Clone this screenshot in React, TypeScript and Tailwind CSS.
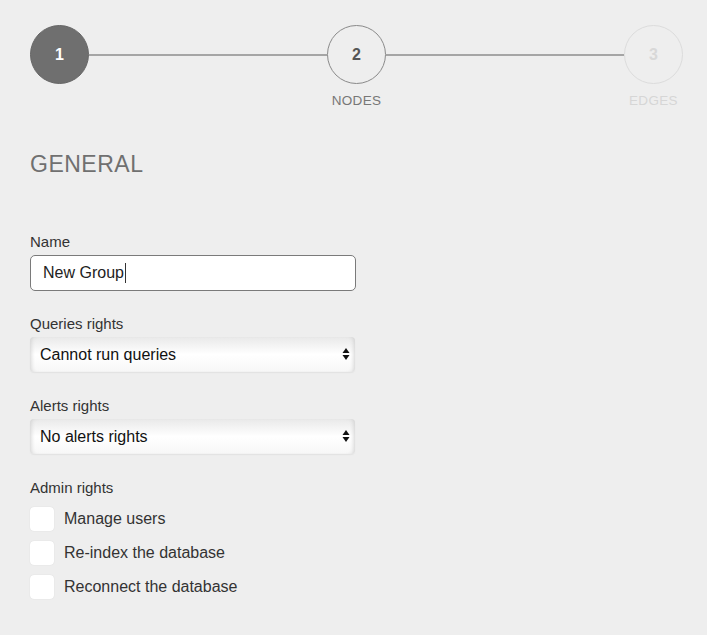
const steps = [
  { n: 1, label: "", state: "done" },
  { n: 2, label: "NODES", state: "next" },
  { n: 3, label: "EDGES", state: "todo" },
];

function Step({ n, label, state }: { n: number; label: string; state: string }) {
  const circle =
    state === "done"
      ? "bg-[#6f6f6f] border-[#666] text-white"
      : state === "next"
        ? "border-[#8a8a8a] text-[#555]"
        : "border-[#dcdcdc] text-[#d8d8d8]";
  const text = state === "todo" ? "text-[#d6d6d6]" : "text-[#777]";
  return (
    <div className="relative flex flex-col items-center">
      <div
        className={`w-[59px] h-[59px] rounded-full border flex items-center justify-center text-[16px] font-bold ${circle}`}
      >
        {n}
      </div>
      <span className={`absolute top-[66px] text-[13.5px] tracking-wide ${text}`}>{label}</span>
    </div>
  );
}

function Select({ value }: { value: string }) {
  return (
    <div className="relative w-[325px] h-[35px] rounded-[4px] bg-gradient-to-b from-[#e9e9e9] via-white to-[#f7f7f7] shadow-[inset_4px_0_4px_-3px_#d0d0d0,inset_-4px_0_4px_-3px_#d0d0d0,0_1px_1px_#e2e2e2] flex items-center pl-[10px] text-[16px] text-[#111]">
      {value}
      <span className="absolute right-[5px] top-[10px] flex flex-col items-center leading-none">
        <svg width="8" height="14" viewBox="0 0 8 14">
          <path d="M4 1 L7.5 6 H0.5 Z" fill="#111" />
          <path d="M4 13 L7.5 8 H0.5 Z" fill="#111" />
        </svg>
      </span>
    </div>
  );
}

const checks = ["Manage users", "Re-index the database", "Reconnect the database"];

export default function App() {
  return (
    <div className="w-[707px] h-[635px] bg-[#eeeeee] pl-[30px] pt-[25px] font-['Liberation_Sans',Arial,sans-serif]">
      <div className="flex items-center w-[653px]">
        {steps.map((s, i) => (
          <div key={s.n} className={`flex items-center ${i < steps.length - 1 ? "flex-1" : ""}`}>
            <Step {...s} />
            {i < steps.length - 1 && <div className="flex-1 h-[2px] bg-[#a5a5a5]" />}
          </div>
        ))}
      </div>

      <h2 className="mt-[69px] text-[23px] text-[#707070] tracking-[0.5px] leading-none">GENERAL</h2>

      <div className="mt-[58px]">
        <label className="block text-[15px] text-[#333] leading-none">Name</label>
        <div className="mt-[6px] w-[326px] h-[36px] rounded-[5px] border border-[#7a7a7a] bg-white flex items-center pl-[12px] text-[16px] text-[#222]">
          New Group<span className="inline-block w-px h-[20px] bg-[#333] ml-px" />
        </div>
      </div>

      <div className="mt-[25px]">
        <label className="block text-[15px] text-[#333] leading-none">Queries rights</label>
        <div className="mt-[6px]">
          <Select value="Cannot run queries" />
        </div>
      </div>

      <div className="mt-[26px]">
        <label className="block text-[15px] text-[#333] leading-none">Alerts rights</label>
        <div className="mt-[6px]">
          <Select value="No alerts rights" />
        </div>
      </div>

      <div className="mt-[26px]">
        <label className="block text-[15px] text-[#333] leading-none">Admin rights</label>
        <div className="mt-[12px] flex flex-col gap-[10px]">
          {checks.map((c) => (
            <div key={c} className="flex items-center gap-[10px]">
              <div className="w-[24px] h-[24px] rounded-[4px] bg-white shadow-[0_0_1px_#ccc]" />
              <span className="text-[16px] text-[#333]">{c}</span>
            </div>
          ))}
        </div>
      </div>
    </div>
  );
}
